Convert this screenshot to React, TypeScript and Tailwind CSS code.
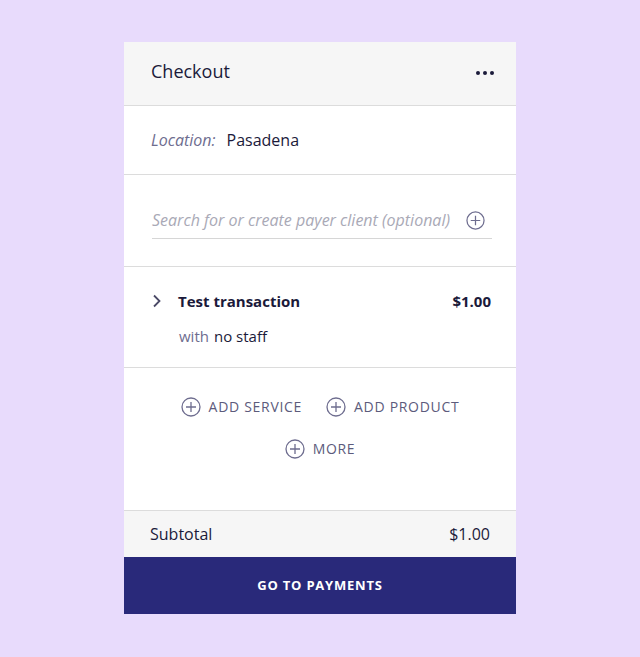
import React from "react";

const PlusCircle = ({ size = 20, color = "#6e6d8f" }: { size?: number; color?: string }) => (
  <svg width={size} height={size} viewBox="0 0 20 20" fill="none">
    <circle cx="10" cy="10" r="9" stroke={color} strokeWidth="1.3" />
    <path d="M10 5v10M5 10h10" stroke={color} strokeWidth="1.3" />
  </svg>
);

const App = () => {
  const actions = ["ADD SERVICE", "ADD PRODUCT"];

  return (
    <div className="w-full h-[657px] bg-[#e8dbfc] flex justify-center pt-[42px] font-['Open_Sans',sans-serif] text-[#1b1a3a]">
      <div className="w-[392px] h-[572px] bg-white flex flex-col">
        <div className="h-[64px] bg-[#f6f6f6] border-b border-[#dcdcdc] flex items-center justify-between pl-[27px] pr-[22px]">
          <span className="text-[18px] pb-[4px]">Checkout</span>
          <div className="flex gap-[3px] pb-[2px]">
            <span className="w-[4px] h-[4px] rounded-full bg-[#1b1a3a]" />
            <span className="w-[4px] h-[4px] rounded-full bg-[#1b1a3a]" />
            <span className="w-[4px] h-[4px] rounded-full bg-[#1b1a3a]" />
          </div>
        </div>

        <div className="h-[69px] border-b border-[#dcdcdc] flex items-center px-[27px] text-[16px]">
          <span className="italic text-[#6e6d8f] mr-[11px]">Location:</span>
          <span>Pasadena</span>
        </div>

        <div className="h-[92px] border-b border-[#dcdcdc] pl-[28px] pr-[24px] pt-[33px]">
          <div className="flex items-center justify-between border-b border-[#d6d6d6] pb-[6px] pr-[7px]">
            <span className="italic text-[16px] text-[#a9a9b6]">Search for or create payer client (optional)</span>
            <PlusCircle size={19} />
          </div>
        </div>

        <div className="h-[101px] border-b border-[#dcdcdc] px-[28px] pt-[23px]">
          <div className="flex items-center justify-between">
            <div className="flex items-center">
              <svg width="10" height="14" viewBox="0 0 10 14" fill="none" className="mr-[16px]">
                <path d="M2 1.5l5.5 5.5L2 12.5" stroke="#4a4966" strokeWidth="1.8" />
              </svg>
              <span className="font-bold text-[15px]">Test transaction</span>
            </div>
            <span className="font-bold text-[15px] mr-[-3px]">$1.00</span>
          </div>
          <div className="pl-[27px] mt-[12px] text-[15px]">
            <span className="text-[#6e6d8f] mr-[5px]">with</span>
            <span>no staff</span>
          </div>
        </div>

        <div className="flex-1 flex flex-col items-center pt-[28px] gap-[21px] text-[#5c5b7c] text-[14px] tracking-[0.05em]">
          <div className="flex gap-[24px]">
            {actions.map((a) => (
              <div key={a} className="flex items-center gap-[8px]">
                <PlusCircle />
                <span>{a}</span>
              </div>
            ))}
          </div>
          <div className="flex items-center gap-[8px]">
            <PlusCircle />
            <span>MORE</span>
          </div>
        </div>

        <div className="h-[47px] bg-[#f6f6f6] border-t border-[#dcdcdc] flex items-center justify-between px-[26px] text-[16px]">
          <span>Subtotal</span>
          <span>$1.00</span>
        </div>

        <button className="h-[57px] bg-[#29297a] text-white font-bold text-[13px] tracking-[0.06em]">
          GO TO PAYMENTS
        </button>
      </div>
    </div>
  );
};

export default App;
